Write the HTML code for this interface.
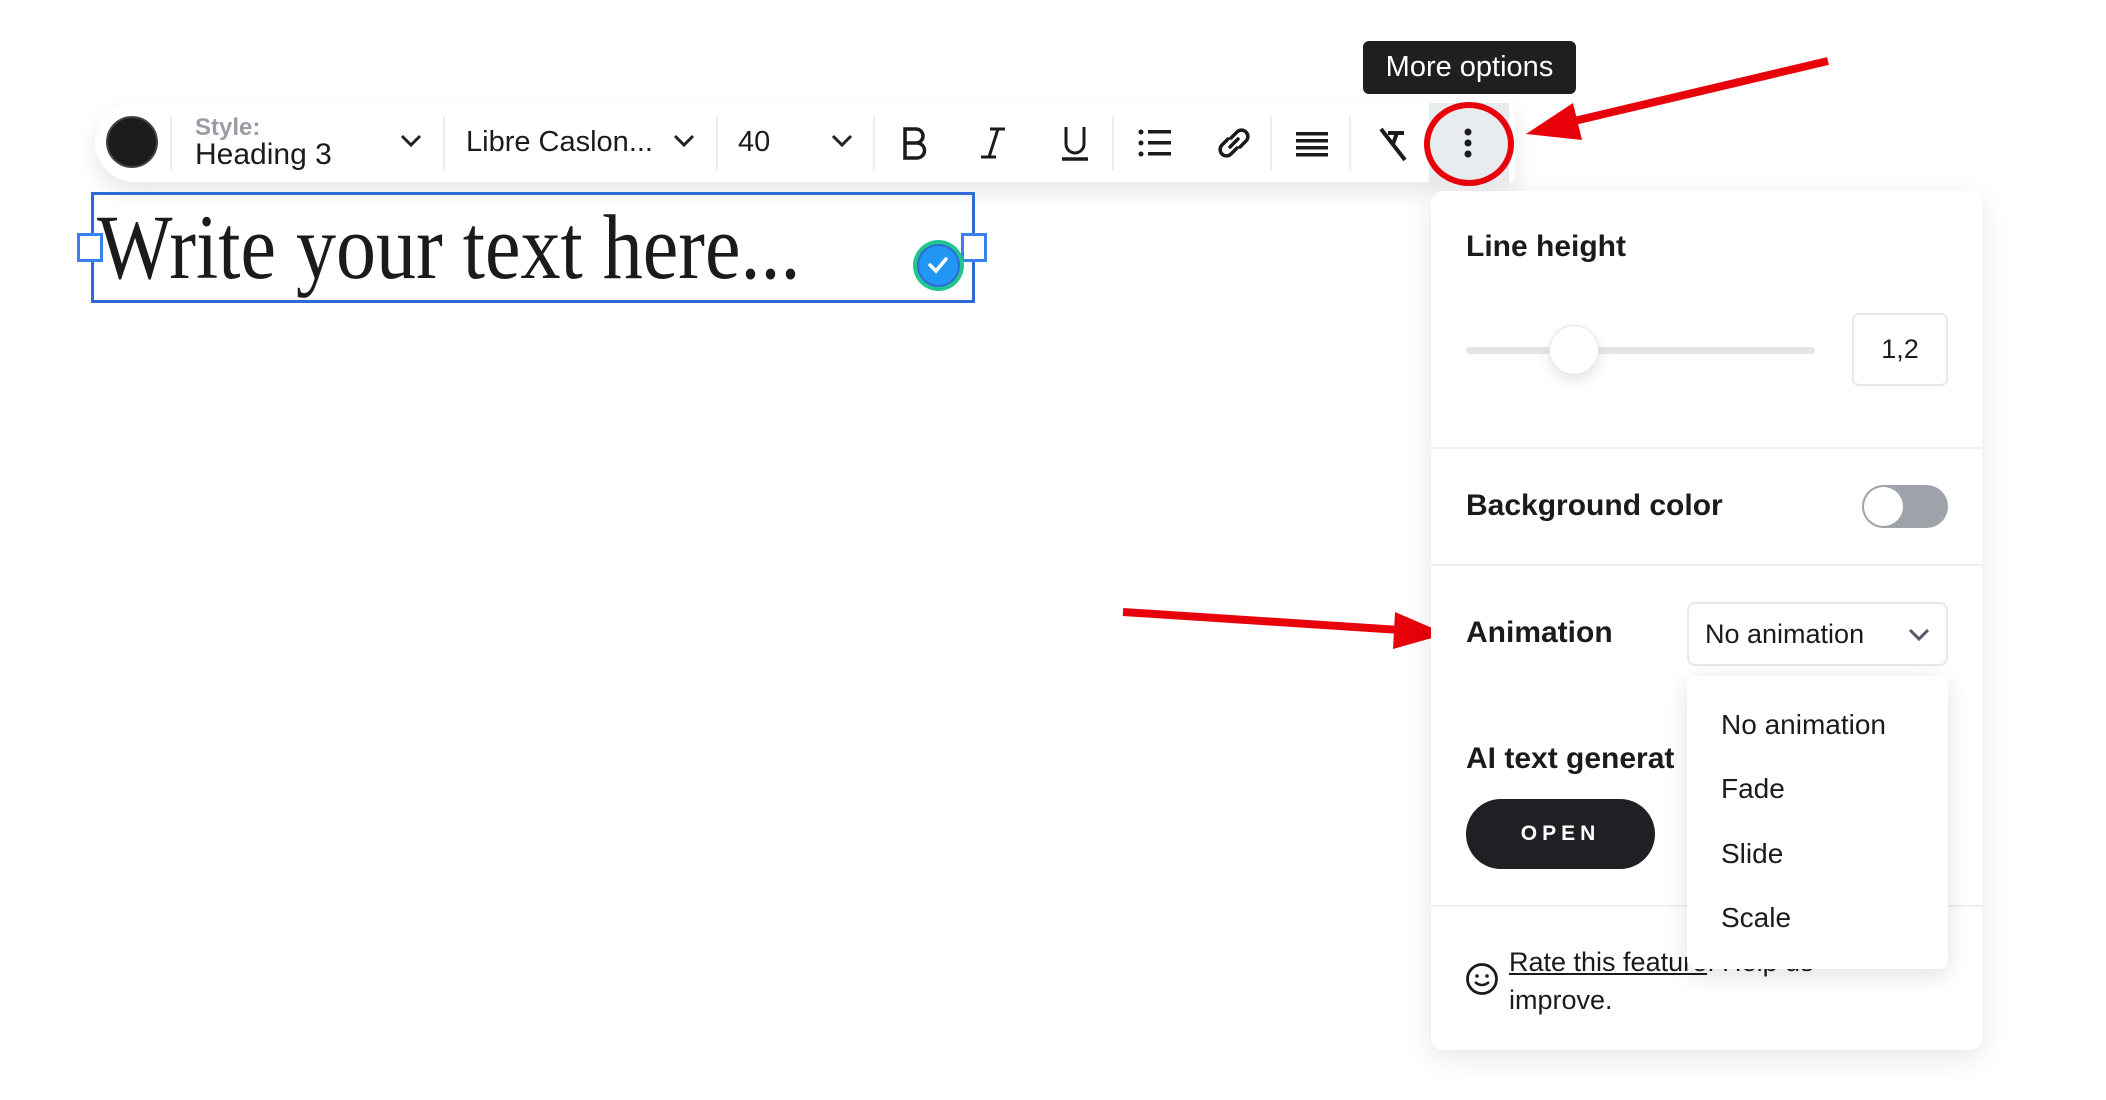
<!DOCTYPE html>
<html><head><meta charset="utf-8"><style>
*{margin:0;padding:0;box-sizing:border-box}
body{width:2106px;height:1100px;background:#fff;position:relative;overflow:hidden;font-family:"Liberation Sans",sans-serif;color:#1b1b1b}
.abs{position:absolute}
.sep{position:absolute;top:116px;width:2px;height:54px;background:#ececec}
.t{position:absolute;white-space:nowrap}
</style></head><body>
<!-- toolbar -->
<div class="abs" style="left:95px;top:103px;width:1420px;height:79px;background:#fff;border-radius:40px 0 0 40px;box-shadow:0 10px 24px rgba(0,0,0,0.10)"></div>
<div class="abs" style="left:1429px;top:103px;width:80px;height:79px;background:#e9ecef"></div>
<div class="abs" style="left:106px;top:116px;width:52px;height:52px;border-radius:50%;background:#1c1c1c;border:2px solid #444"></div>
<div class="sep" style="left:170px"></div>
<div class="t" style="left:195px;top:114px;font-size:24px;color:#9a9ea4;font-weight:bold">Style:</div>
<div class="t" style="left:195px;top:138px;font-size:30px">Heading 3</div>
<svg class="abs" style="left:399px;top:133px" width="24" height="16"><path d="M3 3 L12 12 L21 3" stroke="#222" stroke-width="3" fill="none"/></svg>
<div class="sep" style="left:443px"></div>
<div class="t" style="left:466px;top:126px;font-size:29px">Libre Caslon...</div>
<svg class="abs" style="left:672px;top:133px" width="24" height="16"><path d="M3 3 L12 12 L21 3" stroke="#222" stroke-width="3" fill="none"/></svg>
<div class="sep" style="left:716px"></div>
<div class="t" style="left:738px;top:126px;font-size:29px">40</div>
<svg class="abs" style="left:830px;top:133px" width="24" height="16"><path d="M3 3 L12 12 L21 3" stroke="#222" stroke-width="3" fill="none"/></svg>
<div class="sep" style="left:873px"></div>
<svg class="abs" style="left:900px;top:126px" width="30" height="34"><path d="M5 3 H16 a7 7 0 0 1 0 14 H5 Z M5 17 H17 a7.5 7.5 0 0 1 0 15 H5 Z" stroke="#1b1b1b" stroke-width="3.5" fill="none"/></svg>
<svg class="abs" style="left:978px;top:126px" width="30" height="34"><path d="M12 3 H27 M3 31 H18 M20 3 L11 31" stroke="#1b1b1b" stroke-width="3" fill="none"/></svg>
<svg class="abs" style="left:1060px;top:124px" width="30" height="38"><path d="M6 3 V20 a9 9 0 0 0 18 0 V3" stroke="#1b1b1b" stroke-width="3" fill="none"/><path d="M2 35 H28" stroke="#1b1b1b" stroke-width="3.5"/></svg>
<div class="sep" style="left:1112px"></div>
<svg class="abs" style="left:1137px;top:127px" width="36" height="32"><g fill="#1b1b1b"><circle cx="4" cy="5" r="2.5"/><circle cx="4" cy="16" r="2.5"/><circle cx="4" cy="27" r="2.5"/><rect x="11" y="3" width="23" height="3.5"/><rect x="11" y="14" width="23" height="3.5"/><rect x="11" y="25" width="23" height="3.5"/></g></svg>
<svg class="abs" style="left:1215px;top:124px" width="38" height="38"><g stroke="#1b1b1b" stroke-width="3.5" fill="none" stroke-linecap="round"><path d="M16 14 L22 8 a6 6 0 0 1 9 9 L25 23"/><path d="M22 24 L16 30 a6 6 0 0 1 -9 -9 L13 15"/><path d="M15 23 L23 15"/></g></svg>
<div class="sep" style="left:1270px"></div>
<svg class="abs" style="left:1295px;top:130px" width="34" height="28"><g fill="#1b1b1b"><rect x="1" y="2" width="32" height="3.5"/><rect x="1" y="9" width="32" height="3.5"/><rect x="1" y="16" width="32" height="3.5"/><rect x="1" y="23" width="32" height="3.5"/></g></svg>
<div class="sep" style="left:1349px"></div>
<svg class="abs" style="left:1376px;top:126px" width="34" height="36"><g stroke="#1b1b1b" stroke-width="4" fill="none"><path d="M12 7 H28 M21 7 L17 18"/><path d="M5 3 L29 34"/></g></svg>
<svg class="abs" style="left:1460px;top:128px" width="16" height="32"><g fill="#1b1b1b"><circle cx="8" cy="4" r="3.5"/><circle cx="8" cy="15" r="3.5"/><circle cx="8" cy="26" r="3.5"/></g></svg>
<div class="abs" style="left:1424px;top:102px;width:90px;height:84px;border:6px solid #e8000b;border-radius:50%"></div>
<!-- tooltip -->
<div class="abs" style="left:1363px;top:41px;width:213px;height:53px;background:#1e1f21;border-radius:6px;color:#fff;font-size:29px;line-height:53px;text-align:center">More options</div>
<svg class="abs" style="left:0;top:0" width="2106" height="1100">
<path d="M1828 61 L1570 122" stroke="#e8000b" stroke-width="8"/>
<path d="M1526 134 L1573 103 L1582 140 Z" fill="#e8000b"/>
<path d="M1123 612 L1400 630" stroke="#e8000b" stroke-width="8"/>
<path d="M1446 634 L1395 612 L1393 649 Z" fill="#e8000b"/>
</svg>
<!-- text box -->
<div class="abs" style="left:91px;top:192px;width:884px;height:111px;border:3.5px solid #2f6bd8"></div>
<div class="t" style="left:97px;top:194px;font-family:'Liberation Serif',serif;font-size:92px;color:#1b1b1b;transform:scaleX(0.87);transform-origin:0 0">Write your text here...</div>
<div class="abs" style="left:77px;top:233px;width:26px;height:29px;background:#fff;border:3.5px solid #3a7ff0"></div>
<div class="abs" style="left:961px;top:233px;width:26px;height:29px;background:#fff;border:3.5px solid #3a7ff0"></div>
<div class="abs" style="left:913px;top:240px;width:51px;height:51px;border-radius:50%;background:#1fc690;padding:4px"><div style="width:43px;height:43px;border-radius:50%;background:#2196f3;border:2px solid #2f6bd8"></div></div>
<svg class="abs" style="left:926px;top:254px" width="24" height="22"><path d="M4 11 L10 17 L20 5" stroke="#fff" stroke-width="3.5" fill="none" stroke-linecap="round"/></svg>
<!-- panel -->
<div class="abs" style="left:1431px;top:191px;width:551px;height:859px;background:#fff;border-radius:12px;box-shadow:0 8px 30px rgba(0,0,0,0.10)"></div>
<div class="t" style="left:1466px;top:230px;font-size:30px;font-weight:bold">Line height</div>
<div class="abs" style="left:1466px;top:347px;width:349px;height:7px;border-radius:4px;background:#e6e6e6"></div>
<div class="abs" style="left:1549px;top:325px;width:50px;height:50px;border-radius:50%;background:#fff;border:1px solid #e4e4e4;box-shadow:0 6px 14px rgba(0,0,0,0.1)"></div>
<div class="abs" style="left:1852px;top:313px;width:96px;height:73px;border:2px solid #e8e8e8;border-radius:7px;font-size:27px;text-align:center;line-height:69px">1,2</div>
<div class="abs" style="left:1431px;top:447px;width:551px;height:2px;background:#eef0f3"></div>
<div class="t" style="left:1466px;top:489px;font-size:30px;font-weight:bold">Background color</div>
<div class="abs" style="left:1862px;top:485px;width:86px;height:43px;border-radius:22px;background:#9ea3a9"></div>
<div class="abs" style="left:1864px;top:487px;width:39px;height:39px;border-radius:50%;background:#fff"></div>
<div class="abs" style="left:1431px;top:564px;width:551px;height:2px;background:#eef0f3"></div>
<div class="t" style="left:1466px;top:616px;font-size:30px;font-weight:bold">Animation</div>
<div class="abs" style="left:1687px;top:602px;width:261px;height:64px;border:2px solid #e6e8eb;border-radius:8px"></div>
<div class="t" style="left:1705px;top:619px;font-size:27px">No animation</div>
<svg class="abs" style="left:1907px;top:627px" width="24" height="16"><path d="M3 3 L12 12 L21 3" stroke="#555a66" stroke-width="3" fill="none"/></svg>
<div class="t" style="left:1466px;top:742px;font-size:30px;font-weight:bold">AI text generat</div>
<div class="abs" style="left:1466px;top:799px;width:189px;height:70px;border-radius:35px;background:#1f2023;color:#fff;font-size:21px;letter-spacing:5px;text-align:center;line-height:70px;font-weight:bold">OPEN</div>
<div class="abs" style="left:1431px;top:905px;width:551px;height:2px;background:#eef0f3"></div>
<svg class="abs" style="left:1465px;top:962px" width="34" height="34"><circle cx="17" cy="17" r="14.5" stroke="#1b1b1b" stroke-width="2.8" fill="none"/><circle cx="12" cy="14" r="1.8" fill="#1b1b1b"/><circle cx="22" cy="14" r="1.8" fill="#1b1b1b"/><path d="M10 20 Q17 26 24 20" stroke="#1b1b1b" stroke-width="2.5" fill="none"/></svg>
<div class="t" style="left:1509px;top:943px;font-size:27px;line-height:38px"><span style="text-decoration:underline">Rate this feature</span>. Help us<br>improve.</div>
<!-- dropdown -->
<div class="abs" style="left:1687px;top:676px;width:261px;height:293px;background:#fff;border-radius:8px;box-shadow:0 6px 24px rgba(0,0,0,0.12)"></div>
<div class="t" style="left:1721px;top:709px;font-size:28px">No animation</div>
<div class="t" style="left:1721px;top:773px;font-size:28px">Fade</div>
<div class="t" style="left:1721px;top:838px;font-size:28px">Slide</div>
<div class="t" style="left:1721px;top:902px;font-size:28px">Scale</div>
</body></html>
